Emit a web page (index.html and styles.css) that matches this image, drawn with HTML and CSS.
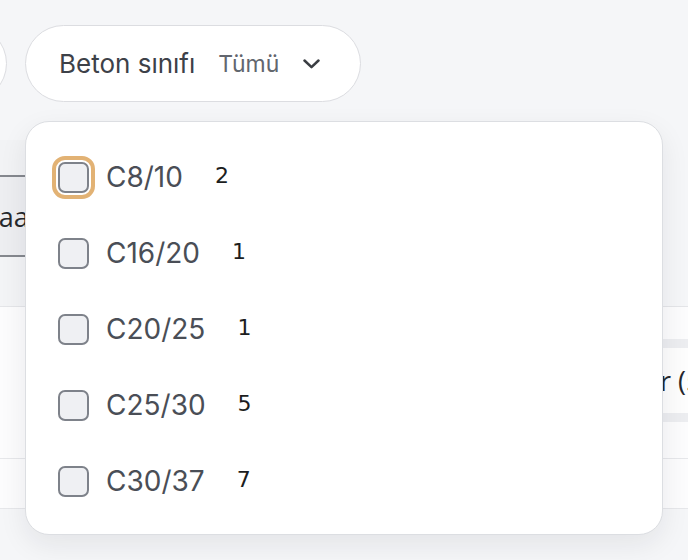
FILE: index.html
```html
<!DOCTYPE html>
<html lang="tr">
<head>
<meta charset="utf-8">
<title>Beton sınıfı filtresi</title>
<link rel="stylesheet" href="styles.css">
</head>
<body>
<div class="page">
  <div class="filters">
    <button class="pill pill-prev"><span class="pill-label">Durum</span></button>
    <button class="pill">
      <span class="pill-label">Beton sınıfı</span>
      <span class="pill-value">Tümü</span>
      <svg class="chev" width="17" height="10" viewBox="0 0 17 10"><polyline points="1.5,1.5 8.5,8.2 15.5,1.5" fill="none" stroke="#3a3d42" stroke-width="2.5" stroke-linecap="round" stroke-linejoin="round"/></svg>
    </button>
  </div>

  <div class="under">
    <div class="strip-top"></div>
    <div class="search"><span class="search-text">Saat</span></div>
    <div class="strip-bottom"></div>
    <div class="table">
      <div class="row row-tall">
        <div class="cols-btn-wrap"><span class="cols-btn">Sütunlar (5)</span></div>
      </div>
      <div class="row row-short"></div>
    </div>
  </div>

  <div class="dropdown">
    <label class="opt">
      <span class="box focus"></span>
      <span class="opt-label">C8/10</span>
      <span class="opt-count">2</span>
    </label>
    <label class="opt">
      <span class="box"></span>
      <span class="opt-label">C16/20</span>
      <span class="opt-count">1</span>
    </label>
    <label class="opt">
      <span class="box"></span>
      <span class="opt-label">C20/25</span>
      <span class="opt-count">1</span>
    </label>
    <label class="opt">
      <span class="box"></span>
      <span class="opt-label">C25/30</span>
      <span class="opt-count">5</span>
    </label>
    <label class="opt">
      <span class="box"></span>
      <span class="opt-label">C30/37</span>
      <span class="opt-count">7</span>
    </label>
  </div>
</div>
</body>
</html>
```

FILE: styles.css
```css
html, body {
  margin: 0;
  padding: 0;
  background: #f5f6f8;
  overflow: hidden;
}
body {
  width: 688px;
  height: 560px;
  font-family: Inter, "Noto Sans", sans-serif;
}
.page {
  position: relative;
  width: 688px;
  height: 560px;
}
.filters {
  display: flex;
  gap: 18px;
  padding-top: 25px;
  margin-left: -140px;
}
.pill {
  display: flex;
  align-items: center;
  height: 77px;
  box-sizing: border-box;
  padding: 0 40px 0 33px;
  background: #fff;
  border: 1.5px solid #dcdde1;
  border-radius: 39px;
  font-family: Inter, sans-serif;
  cursor: pointer;
}
.pill-prev {
  width: 147px;
}
.pill-prev .pill-label {
  visibility: hidden;
}
.pill-label {
  font-size: 26px;
  color: #3d4148;
}
.pill-value {
  font-size: 23px;
  color: #62666e;
  margin-left: 23px;
}
.chev {
  margin-left: 24px;
  margin-top: 1px;
}

.under {
  margin-top: 38px;
}
.strip-top {
  height: 35px;
  width: 420px;
  background: #f2f3f5;
}
.search {
  height: 78px;
  width: 420px;
  box-sizing: content-box;
  border-top: 2px solid #85888e;
  border-bottom: 2px solid #85888e;
  background: #edeef1;
  display: flex;
  align-items: center;
}
.search-text {
  font-family: "Open Sans", sans-serif;
  font-size: 27px;
  color: #26282c;
  margin-left: -16px;
}
.strip-bottom {
  height: 49px;
  width: 420px;
  background: #f3f4f6;
}
.table {
  background: #fcfcfd;
  border-top: 1.5px solid #e4e5e8;
}
.row {
  border-bottom: 1.5px solid #e6e7ea;
}
.row-tall {
  height: 151px;
  display: flex;
  justify-content: flex-end;
  align-items: flex-start;
}
.row-short {
  height: 49px;
}
.cols-btn-wrap {
  margin-top: 32px;
  width: 40px;
  overflow: hidden;
  background: #fdfdfd;
  border-top: 9px solid #ecedf0;
  border-bottom: 9px solid #ecedf0;
  height: 65px;
  display: flex;
  align-items: center;
}
.cols-btn {
  font-family: "Open Sans", sans-serif;
  font-size: 27px;
  color: #26282c;
  white-space: nowrap;
  margin-left: -84px;
}

.dropdown {
  position: absolute;
  left: 25px;
  top: 121px;
  width: 638px;
  height: 414px;
  box-sizing: border-box;
  background: #fff;
  border: 1.5px solid #dcdee2;
  border-radius: 24px;
  box-shadow: 0 10px 28px rgba(20, 24, 40, 0.08);
  padding: 17px 32px 13px;
  display: flex;
  flex-direction: column;
}
.opt {
  height: 76px;
  display: flex;
  align-items: center;
  cursor: pointer;
}
.box {
  width: 31px;
  height: 31px;
  box-sizing: border-box;
  border: 2px solid #7e828a;
  border-radius: 7px;
  background: #eff0f3;
  flex: none;
}
.box.focus {
  outline: 4px solid #e2b274;
  outline-offset: 2.5px;
}
.opt-label {
  font-family: Inter, sans-serif;
  font-size: 28px;
  color: #4a4e56;
  margin-left: 17px;
}
.opt-count {
  font-family: "DejaVu Sans", sans-serif;
  font-size: 22px;
  color: #1c1d20;
  margin-left: 32px;
  margin-top: -4px;
}
```
